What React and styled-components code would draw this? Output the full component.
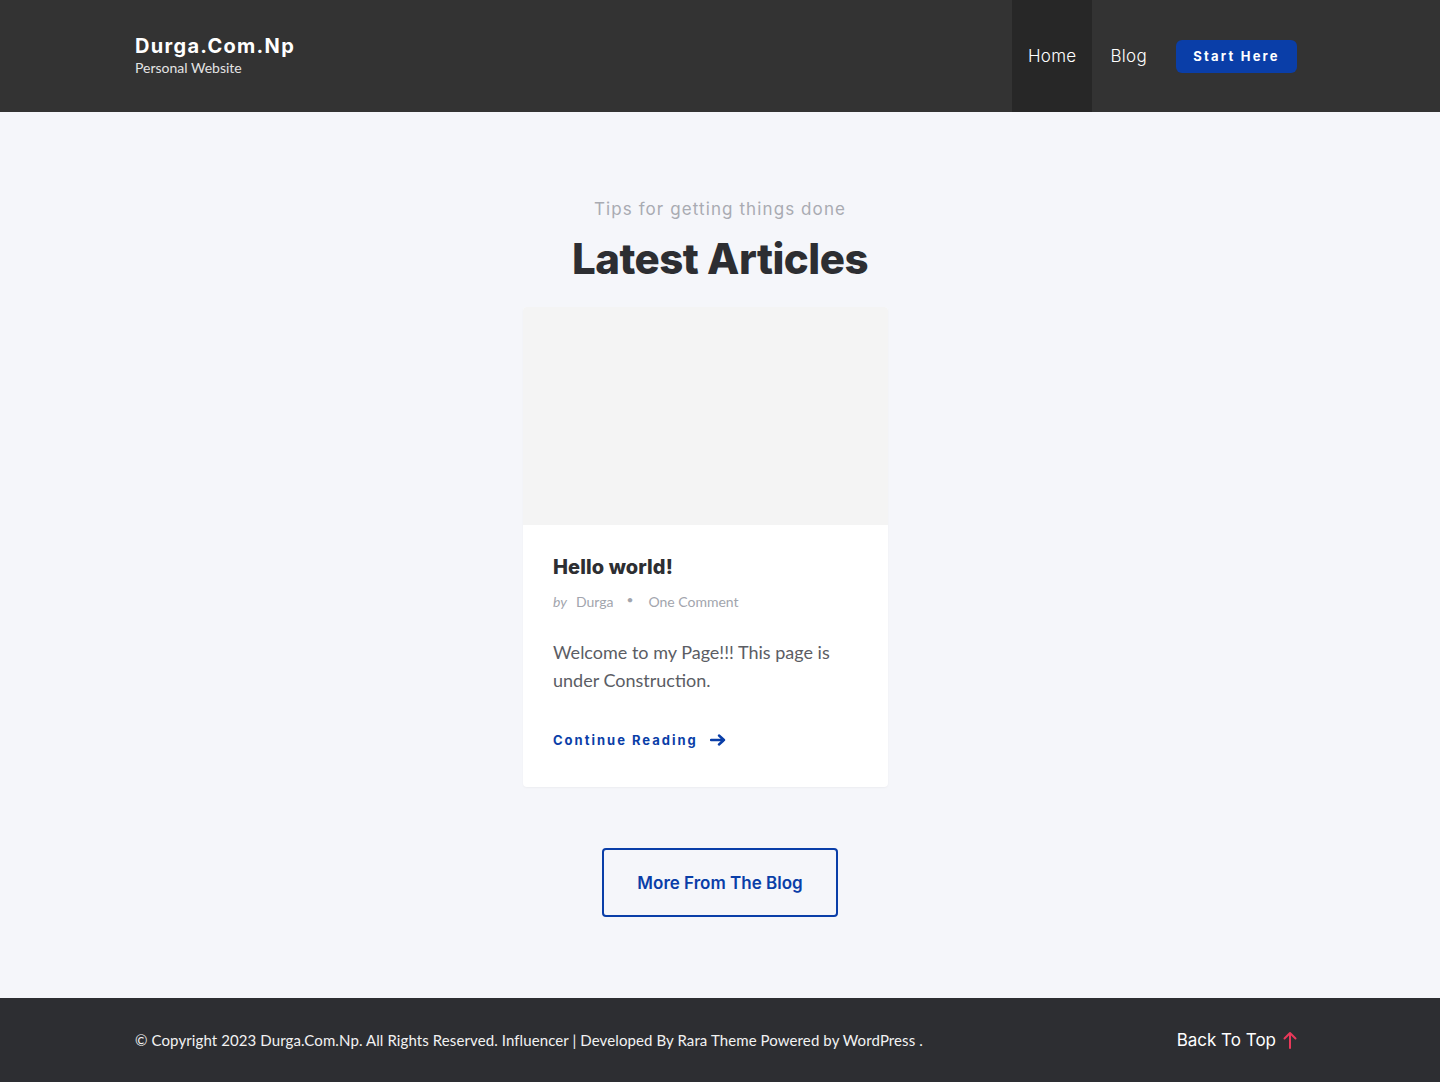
import styled, { createGlobalStyle } from 'styled-components';

const GlobalStyle = createGlobalStyle`
    * { box-sizing: border-box; }
    body {
        margin: 0;
        background: #f5f6fa;
        font-family: 'Lato', 'Noto Sans', sans-serif;
    }
`;

const heading = `'Inter', 'Noto Sans', sans-serif`;

const Header = styled.header`
    background: #333333;
    height: 112px;
`;

const Container = styled.div`
    width: 1170px;
    margin: 0 auto;
    display: flex;
    align-items: center;
    justify-content: space-between;
    height: 100%;
`;

const Branding = styled.div`
    display: flex;
    flex-direction: column;
    margin-top: -2px;
`;

const SiteTitle = styled.a`
    font-family: ${heading};
    font-weight: 700;
    font-size: 20px;
    letter-spacing: 1.3px;
    color: #fff;
    text-decoration: none;
    line-height: 24px;
`;

const SiteDesc = styled.span`
    font-size: 14px;
    color: #e4e4e4;
    margin-top: 1px;
`;

const Nav = styled.nav`
    display: flex;
    align-items: center;
    height: 100%;
    margin-right: 8px;
`;

const NavItem = styled.a`
    display: flex;
    align-items: center;
    height: 100%;
    padding: 0 16px;
    margin-right: ${p => p.$gap || 0}px;
    font-family: ${heading};
    font-weight: 300;
    font-size: 17px;
    letter-spacing: 0.3px;
    color: #fff;
    text-decoration: none;
    background: ${p => (p.$active ? '#272727' : 'transparent')};
`;

const StartButton = styled.a`
    display: flex;
    align-items: center;
    justify-content: center;
    width: 121px;
    height: 33px;
    margin-left: 13px;
    background: #0a3ea8;
    border-radius: 6px;
    color: #fff;
    font-family: ${heading};
    font-weight: 700;
    font-size: 13px;
    letter-spacing: 2.2px;
    text-decoration: none;
`;

const Main = styled.main`
    height: 886px;
    display: flex;
    flex-direction: column;
    align-items: center;
    padding-top: 86px;
`;

const Kicker = styled.p`
    margin: 0;
    font-family: ${heading};
    font-size: 17px;
    letter-spacing: 1.1px;
    color: #a9abb2;
    line-height: 22px;
`;

const Title = styled.h2`
    margin: 11px 0 20px;
    font-family: ${heading};
    font-weight: 800;
    font-size: 42px;
    letter-spacing: -0.5px;
    line-height: 56px;
    color: #2d2e32;
`;

const CardRow = styled.div`
    display: flex;
    justify-content: center;
    width: 1170px;
    padding-right: 29px;
`;

const Card = styled.article`
    width: 365px;
    background: #fff;
    border-radius: 4px;
    box-shadow: 0 1px 2px rgba(0, 0, 0, 0.04);
    overflow: hidden;
`;

const Thumb = styled.div`
    height: 218px;
    background: #f4f4f4;
`;

const CardBody = styled.div`
    padding: 27px 30px 39px;
`;

const PostTitle = styled.h3`
    margin: 0;
    font-family: ${heading};
    font-weight: 800;
    font-size: 20px;
    letter-spacing: 0.1px;
    line-height: 30px;
    color: #2d2e32;
`;

const Meta = styled.div`
    display: flex;
    align-items: center;
    margin-top: 10px;
    font-size: 14px;
    color: #a2a5ad;
    line-height: 20px;
`;

const By = styled.span`
    font-style: italic;
    margin-right: 9px;
`;

const Dot = styled.span`
    margin: 0 15px 0 13px;
    font-size: 12px;
    position: relative;
    top: -2px;
`;

const Excerpt = styled.p`
    margin: 26px 0 0;
    font-size: 18px;
    line-height: 28px;
    color: #5b5d64;
`;

const ReadMore = styled.a`
    display: inline-flex;
    align-items: center;
    margin-top: 38px;
    font-family: ${heading};
    font-weight: 700;
    font-size: 13px;
    letter-spacing: 2px;
    color: #0a3ea8;
    text-decoration: none;
    svg { margin-left: 12px; }
`;

const MoreButton = styled.a`
    display: flex;
    align-items: center;
    justify-content: center;
    margin-top: 61px;
    width: 236px;
    height: 69px;
    border: 2px solid #0a3ea8;
    border-radius: 4px;
    font-family: ${heading};
    font-weight: 600;
    font-size: 17px;
    color: #0a3ea8;
    text-decoration: none;
`;

const Footer = styled.footer`
    background: #2d2e32;
    height: 84px;
`;

const Copy = styled.p`
    margin: 0;
    font-size: 15px;
    color: #f2f2f2;
    letter-spacing: 0.1px;
`;

const BackTop = styled.a`
    display: flex;
    align-items: center;
    margin-right: 8px;
    font-family: ${heading};
    font-size: 17px;
    font-weight: 400;
    color: #fff;
    text-decoration: none;
    svg { margin-left: 7px; }
`;

const Arrow = () => (
    <svg width="16" height="12" viewBox="0 0 16 12" fill="none">
        <path d="M1 6h13M9 1.5l5 4.5-5 4.5" stroke="#0a3ea8" strokeWidth="2.4" strokeLinecap="round" strokeLinejoin="round" />
    </svg>
);

const UpArrow = () => (
    <svg width="14" height="18" viewBox="0 0 14 18" fill="none">
        <path d="M7 17V2M1.5 7.5L7 2l5.5 5.5" stroke="#e8395a" strokeWidth="2" strokeLinecap="round" strokeLinejoin="round" />
    </svg>
);

export default function App() {
    return (
        <>
            <GlobalStyle />
            <Header>
                <Container>
                    <Branding>
                        <SiteTitle href="#">Durga.Com.Np</SiteTitle>
                        <SiteDesc>Personal Website</SiteDesc>
                    </Branding>
                    <Nav>
                        <NavItem href="#" $active $gap={2}>Home</NavItem>
                        <NavItem href="#">Blog</NavItem>
                        <StartButton href="#">Start Here</StartButton>
                    </Nav>
                </Container>
            </Header>
            <Main>
                <Kicker>Tips for getting things done</Kicker>
                <Title>Latest Articles</Title>
                <CardRow>
                    <Card>
                        <Thumb />
                        <CardBody>
                            <PostTitle>Hello world!</PostTitle>
                            <Meta>
                                <By>by</By>
                                <span>Durga</span>
                                <Dot>•</Dot>
                                <span>One Comment</span>
                            </Meta>
                            <Excerpt>Welcome to my Page!!! This page is under Construction.</Excerpt>
                            <ReadMore href="#">Continue Reading <Arrow /></ReadMore>
                        </CardBody>
                    </Card>
                </CardRow>
                <MoreButton href="#">More From The Blog</MoreButton>
            </Main>
            <Footer>
                <Container>
                    <Copy>© Copyright 2023 Durga.Com.Np. All Rights Reserved. Influencer | Developed By Rara Theme Powered by WordPress .</Copy>
                    <BackTop href="#">Back To Top <UpArrow /></BackTop>
                </Container>
            </Footer>
        </>
    );
}
